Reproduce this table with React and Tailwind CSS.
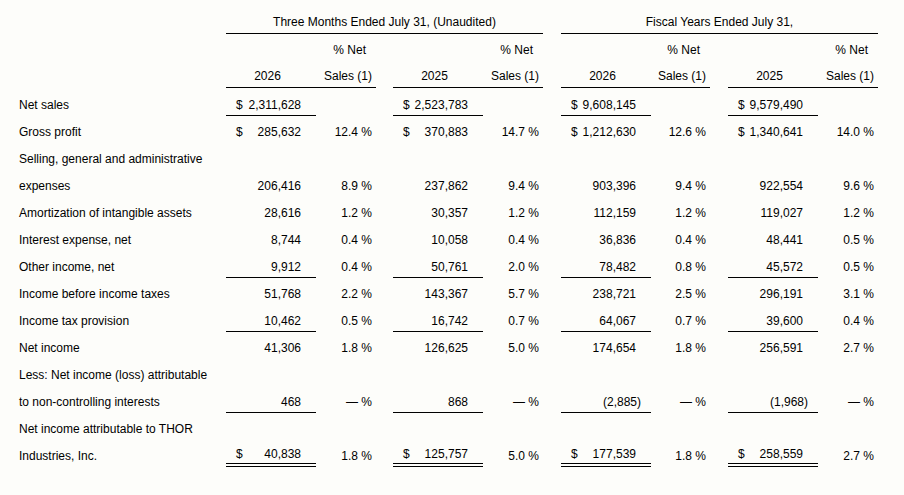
import React from 'react'

const cols = 'grid grid-cols-[226px_90px_60px_17px_90px_60px_18px_90px_59px_18px_90px_60px]'

const rows = [
  { label: 'Net sales', dollar: true, line: 'single', vals: [['2,311,628', ''], ['2,523,783', ''], ['9,608,145', ''], ['9,579,490', '']] },
  { label: 'Gross profit', dollar: true, vals: [['285,632', '12.4 %'], ['370,883', '14.7 %'], ['1,212,630', '12.6 %'], ['1,340,641', '14.0 %']] },
  { label: 'Selling, general and administrative' },
  { label: 'expenses', vals: [['206,416', '8.9 %'], ['237,862', '9.4 %'], ['903,396', '9.4 %'], ['922,554', '9.6 %']] },
  { label: 'Amortization of intangible assets', vals: [['28,616', '1.2 %'], ['30,357', '1.2 %'], ['112,159', '1.2 %'], ['119,027', '1.2 %']] },
  { label: 'Interest expense, net', vals: [['8,744', '0.4 %'], ['10,058', '0.4 %'], ['36,836', '0.4 %'], ['48,441', '0.5 %']] },
  { label: 'Other income, net', line: 'single', vals: [['9,912', '0.4 %'], ['50,761', '2.0 %'], ['78,482', '0.8 %'], ['45,572', '0.5 %']] },
  { label: 'Income before income taxes', vals: [['51,768', '2.2 %'], ['143,367', '5.7 %'], ['238,721', '2.5 %'], ['296,191', '3.1 %']] },
  { label: 'Income tax provision', line: 'single', vals: [['10,462', '0.5 %'], ['16,742', '0.7 %'], ['64,067', '0.7 %'], ['39,600', '0.4 %']] },
  { label: 'Net income', vals: [['41,306', '1.8 %'], ['126,625', '5.0 %'], ['174,654', '1.8 %'], ['256,591', '2.7 %']] },
  { label: 'Less: Net income (loss) attributable' },
  { label: 'to non-controlling interests', line: 'single', vals: [['468', '— %'], ['868', '— %'], ['(2,885)', '— %'], ['(1,968)', '— %']] },
  { label: 'Net income attributable to THOR' },
  { label: 'Industries, Inc.', dollar: true, line: 'double', vals: [['40,838', '1.8 %'], ['125,757', '5.0 %'], ['177,539', '1.8 %'], ['258,559', '2.7 %']] },
]

function Amount({ value, dollar, line }) {
  const neg = value.startsWith('(')
  let border = 'pt-[9px]'
  if (line === 'single') border = 'pt-[9px] border-b border-black'
  if (line === 'double') border = 'pt-[7px] border-b-4 border-double border-black'
  return (
    <div className={`flex justify-between pl-[10px] pr-[15px] h-[27px] ${border}`}>
      <span>{dollar ? '$' : ''}</span>
      <span className={neg ? '-mr-[5px]' : ''}>{value}</span>
    </div>
  )
}

function Row({ row }) {
  return (
    <div className={`${cols} h-[27px]`}>
      <div className="pl-[19px] pt-[9px] whitespace-nowrap">{row.label}</div>
      {row.vals ? (
        row.vals.map((v, i) => (
          <React.Fragment key={i}>
            <Amount value={v[0]} dollar={row.dollar} line={row.line} />
            <div className="text-right pr-[4px] pt-[9px]">{v[1]}</div>
            {i < 3 && <div />}
          </React.Fragment>
        ))
      ) : null}
    </div>
  )
}

export default function App() {
  const groups = [0, 1, 2, 3]
  return (
    <div className="w-[904px] h-[495px] bg-[#fdfdfa] text-black text-[12px] leading-[14px] font-['Liberation_Sans',Arial,sans-serif] overflow-hidden">
      {/* titulos */}
      <div className={`${cols} h-[34px]`}>
        <div />
        <div className="col-span-5 text-center pt-[15px] border-b border-black">Three Months Ended July 31, (Unaudited)</div>
        <div />
        <div className="col-span-5 text-center pt-[15px] border-b border-black">Fiscal Years Ended July 31,</div>
      </div>
      <div className={`${cols} h-[27px]`}>
        <div />
        {groups.map(i => (
          <React.Fragment key={i}>
            <div />
            <div className="text-right pr-[10px] pt-[9px]">% Net</div>
            {i < 3 && <div />}
          </React.Fragment>
        ))}
      </div>
      <div className={`${cols} h-[27px]`}>
        <div />
        {['2026', '2025', '2026', '2025'].map((y, i) => (
          <React.Fragment key={i}>
            <div className="text-center pr-[7px] pt-[8px] border-b border-black">{y}</div>
            <div className="text-right pr-[4px] pt-[8px] border-b border-black">Sales (1)</div>
            {i < 3 && <div />}
          </React.Fragment>
        ))}
      </div>

      <div className="mt-[1px]">
        {rows.map((r, i) => <Row key={i} row={r} />)}
      </div>
    </div>
  )
}
